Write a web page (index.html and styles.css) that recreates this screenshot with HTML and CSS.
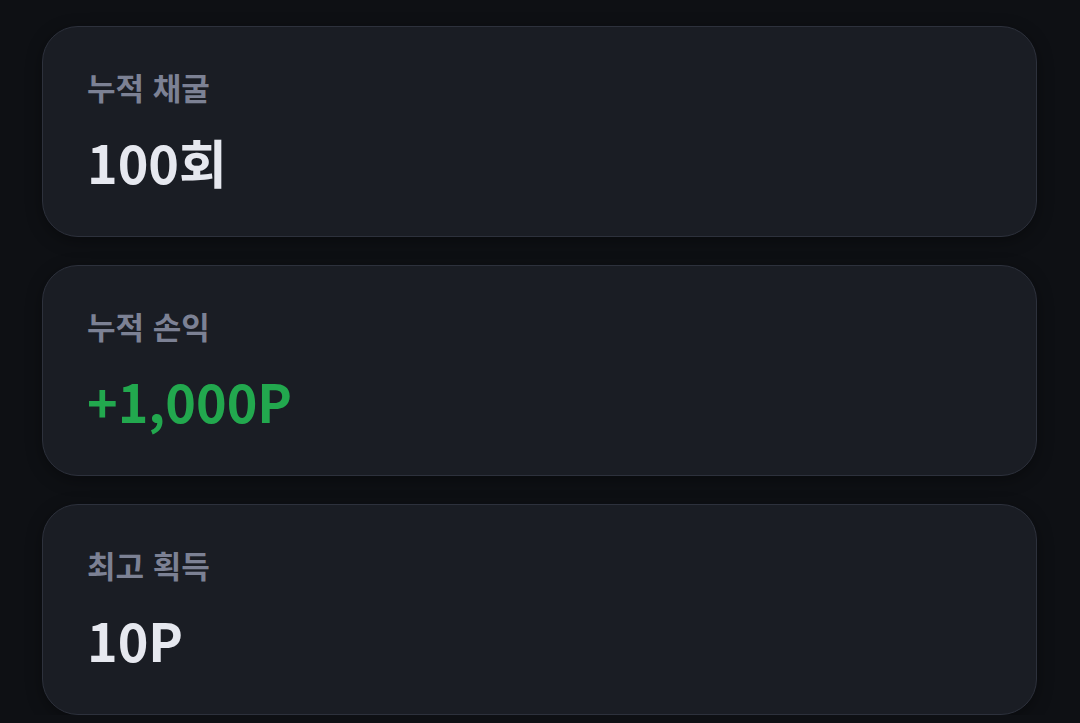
FILE: index.html
```html
<!DOCTYPE html>
<html lang="ko">
<head>
  <meta charset="UTF-8">
  <title>채굴 통계</title>
  <link rel="stylesheet" href="styles.css">
</head>
<body>

  <div class="stats">
    <div class="stat-card">
      <div class="stat-label">누적 채굴</div>
      <div class="stat-value">100회</div>
    </div>

    <div class="stat-card">
      <div class="stat-label">누적 손익</div>
      <div class="stat-value plus">+1,000P</div>
    </div>

    <div class="stat-card">
      <div class="stat-label">최고 획득</div>
      <div class="stat-value">10P</div>
    </div>
  </div>

</body>
</html>
```

FILE: styles.css
```css
body {
  margin: 0;
  background-color: #0e1014;
  color: #e6e8ef;
  font-family: 'Noto Sans CJK KR', 'Noto Sans', sans-serif;
}

.stats {
  display: flex;
  flex-direction: column;
  gap: 28px;
  padding: 26px 43px 0 42px;
}

.stat-card {
  height: 211px;
  box-sizing: border-box;
  padding: 38px 44px;
  background-color: #1a1d24;
  border: 1px solid #2d313c;
  border-radius: 36px;
  box-shadow: 0 4px 16px rgba(0, 0, 0, 0.35);
}

.stat-label {
  font-size: 31px;
  font-weight: 700;
  color: #7c8194;
  line-height: 1.4;
}

.stat-value {
  margin-top: 23px;
  font-size: 52px;
  font-weight: 700;
  line-height: 1.2;
}

.stat-value.plus {
  color: #22a84e;
}
```
